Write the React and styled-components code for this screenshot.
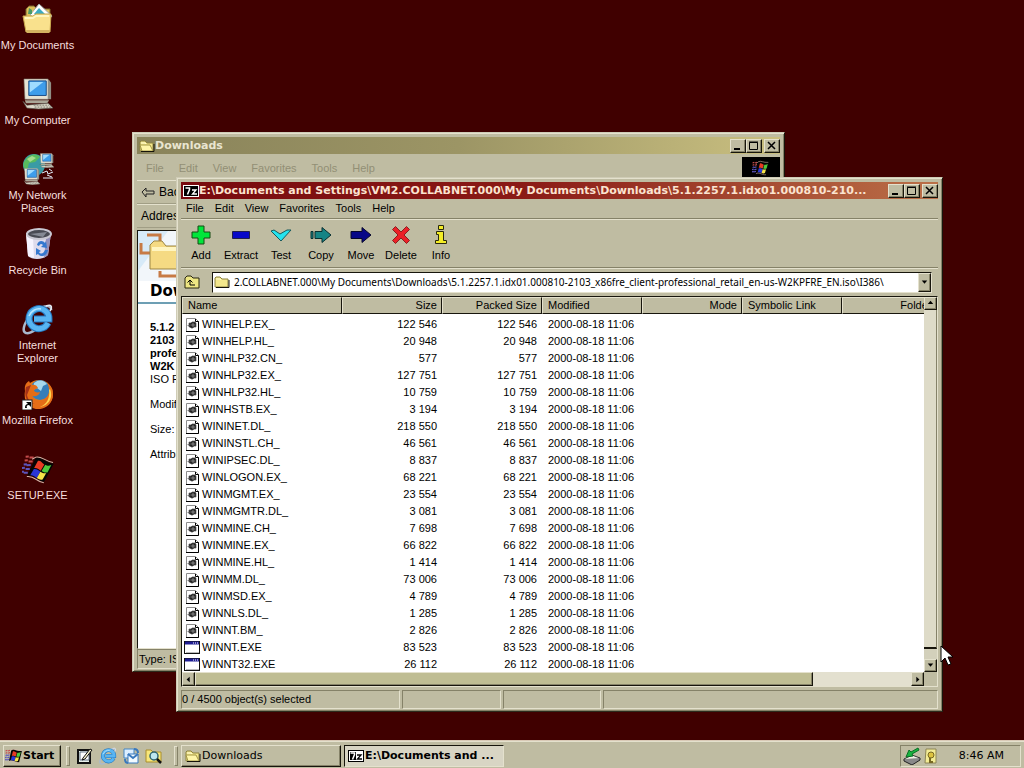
import React from "react";
import styled, { createGlobalStyle, css } from "styled-components";

const face = "#bfbca2";
const light = "#e4e1cd";
const shade = "#858268";
const ui = '"Liberation Sans", Arial, sans-serif';
const tahoma = '"DejaVu Sans", Verdana, sans-serif';

const raised = css`
  border: 1px solid;
  border-color: ${light} #17150c #17150c ${light};
  box-shadow: inset -1px -1px 0 ${shade};
`;
const sunken = css`
  border: 1px solid;
  border-color: ${shade} ${light} ${light} ${shade};
`;

const GlobalStyle = createGlobalStyle`
  * { box-sizing: border-box; }
  body { margin: 0; background: #400000; font: 11px/13px ${ui}; color: #000; }
  button, input { font: inherit; color: inherit; margin: 0; padding: 0; border: 0; background: none; }
  svg { display: block; flex: none; }
`;

const Screen = styled.div`
  display: flex;
  flex-direction: column;
  height: 100vh;
  overflow: hidden;
  background: #400000;
`;
const Desktop = styled.main`
  position: relative;
  flex: 1;
  min-height: 0;
`;
const Shortcuts = styled.nav`
  display: grid;
  grid-auto-rows: 75px;
  width: 75px;
`;
const Shortcut = styled.button`
  display: flex;
  flex-direction: column;
  align-items: center;
  gap: 4px;
  padding-top: 3px;
  color: #f6dede;
  text-align: center;
`;

/* Windows */
const Window = styled.section`
  position: absolute;
  left: ${(p) => p.$x}px;
  top: ${(p) => p.$y}px;
  width: ${(p) => p.$w}px;
  height: ${(p) => p.$h}px;
  display: flex;
  flex-direction: column;
  padding: 4px 4px 2px;
  background: ${face};
  border: 1px solid;
  border-color: #cfccb6 #17150c #2c2a1c #cfccb6;
  box-shadow: inset 1px 1px 0 ${light}, inset -1px -1px 0 ${shade};
`;
const TitleBar = styled.header`
  display: flex;
  align-items: center;
  height: 17px;
  padding: 0 0 0 2px;
  background: ${(p) =>
    p.$active
      ? "linear-gradient(90deg, #780a0e 0%, #8a1a16 45%, #bb7048 100%)"
      : "linear-gradient(90deg, #89835a 0%, #9c9565 50%, #c9bf80 100%)"};
`;
const Title = styled.h1`
  flex: 1;
  min-width: 0;
  margin: 0;
  overflow: hidden;
  white-space: nowrap;
  font: bold 11px/17px ${tahoma};
  color: ${(p) => (p.$active ? "#fbe3d0" : "#e9e5d0")};
`;
const Caption = styled.button`
  display: grid;
  place-items: center;
  width: 16px;
  height: 14px;
  margin-left: ${(p) => (p.$gap ? 2 : 0)}px;
  background: ${face};
  ${raised}
`;
const MenuBar = styled.nav`
  display: flex;
  align-items: center;
  gap: ${(p) => p.$gap}px;
  height: ${(p) => p.$h}px;
  padding: ${(p) => (p.$dim ? "2px 0 0 9px" : "0 0 0 5px")};
  color: ${(p) => (p.$dim ? "#928f75" : "#000")};
`;
const Rule = styled.div`
  height: 2px;
  border-top: 1px solid ${shade};
  border-bottom: 1px solid ${light};
`;

/* Downloads folder window */
const Throbber = styled.div`
  display: grid;
  place-items: center;
  width: 38px;
  height: 22px;
  margin-left: auto;
  background: #000;
`;
const Band = styled.div`
  display: flex;
  align-items: center;
  gap: 4px;
  height: 24px;
  padding: 0 4px;
  border-top: 1px solid ${light};
  border-bottom: 1px solid #a19e85;
  font-size: 12px;
`;
const FolderView = styled.div`
  flex: 1;
  min-height: 0;
  margin-top: 2px;
  overflow: hidden;
  background: #fff;
  border: 1px solid;
  border-color: #17150c ${light} ${light} #17150c;
`;
const Banner = styled.div`
  height: 73px;
  border-bottom: 2px solid #6d9fb4;
`;
const BannerTitle = styled.h2`
  margin: 0;
  padding-left: 12px;
  font: bold 15px/20px ${tahoma};
`;
const Details = styled.div`
  display: grid;
  gap: 12px;
  padding: 17px 12px;
  p { margin: 0; }
`;
const FolderStatus = styled.footer`
  height: 20px;
  padding: 0 1px;
  line-height: 19px;
  ${sunken}
`;

/* 7-Zip window */
const Toolbar = styled.div`
  display: flex;
  height: 47px;
`;
const Tool = styled.button`
  display: flex;
  flex-direction: column;
  align-items: center;
  justify-content: flex-start;
  gap: 2px;
  width: 40px;
  padding-top: 3px;
`;
const PathRow = styled.div`
  display: flex;
  align-items: center;
  gap: 5px;
  height: 27px;
  padding: 0 6px 1px 3px;
`;
const UpButton = styled.button`
  width: 23px;
`;
const Combo = styled.div`
  display: flex;
  align-items: center;
  flex: 1;
  min-width: 0;
  height: 21px;
  padding-left: 1px;
  background: #fff;
  border: 1px solid;
  border-color: #17150c ${light} ${light} #17150c;
  input {
    flex: 1;
    min-width: 0;
    margin-left: 4px;
    outline: 0;
    font: 10px/14px "Noto Sans", ${ui};
  }
`;
const ArrowButton = styled.button`
  display: grid;
  place-items: center;
  flex: none;
  width: ${(p) => p.$w || 13}px;
  height: ${(p) => p.$h || 13}px;
  background: ${face};
  ${raised}
`;
const ListBox = styled.div`
  display: grid;
  grid-template-columns: minmax(0, 1fr) 13px;
  grid-template-rows: minmax(0, 1fr) 14px;
  flex: 1;
  min-height: 0;
  background: ${face};
  border: 1px solid;
  border-color: #17150c ${light} ${light} #17150c;
`;
const ListClip = styled.div`
  overflow: hidden;
  background: #fff;
`;
const FileTable = styled.table`
  width: 760px;
  table-layout: fixed;
  border-spacing: 0;
  th, td {
    height: 17px;
    padding: 0 5px 0 6px;
    font-weight: normal;
    line-height: 17px;
    white-space: nowrap;
    text-align: left;
  }
  th {
    background: ${face};
    border: 1px solid;
    border-color: ${light} #17150c #17150c ${light};
    padding: 0 4px 0 5px;
    line-height: 15px;
  }
  th[data-num], td[data-num] { text-align: right; }
  td:first-child { padding-left: 2px; }
`;
const Spacer = styled.tbody`
  td { height: 2px; line-height: 2px; }
`;
const NameCell = styled.span`
  display: flex;
  align-items: center;
  gap: 2px;
`;
const VScroll = styled.div`
  display: flex;
  flex-direction: column;
  background: #e3e0d0;
`;
const VThumb = styled.div`
  flex: 1;
  background: #dedbc8;
  border-right: 1px solid ${shade};
  border-bottom: 2px solid #17150c;
`;
const VRest = styled.div`
  height: 10px;
  background: #d3d0bb;
`;
const HScroll = styled.div`
  display: flex;
  background: #e3e0cf;
`;
const HThumb = styled.div`
  flex: 0 1 83.3%;
  background: #bfbd93;
  ${raised}
`;
const Track = styled.div`
  flex: 1;
`;
const StatusBar = styled.footer`
  display: grid;
  grid-template-columns: 219px 99px 98px 1fr;
  gap: 2px;
  height: 19px;
  margin-top: 3px;
`;
const StatusCell = styled.div`
  padding: 0;
  line-height: 17px;
  white-space: nowrap;
  ${sunken}
`;

/* Taskbar */
const Taskbar = styled.footer`
  display: flex;
  align-items: center;
  height: 28px;
  padding: 2px 3px 0;
  background: ${face};
  border-top: 1px solid #d9c9b6;
  box-shadow: inset 0 1px 0 ${light};
`;
const StartButton = styled.button`
  display: flex;
  align-items: center;
  width: 58px;
  height: 22px;
  padding-left: 1px;
  font: bold 11px/18px ${tahoma};
  ${raised}
`;
const Grip = styled.div`
  width: 4px;
  height: 20px;
  margin: 0 3px 0 5px;
  border: 1px solid;
  border-color: ${light} ${shade} ${shade} ${light};
`;
const QuickLaunch = styled.div`
  display: flex;
  gap: 5px;
  margin: 0 6px 0 3px;
`;
const Task = styled.button`
  display: flex;
  align-items: center;
  gap: 1px;
  width: 160px;
  height: 22px;
  margin-right: 3px;
  padding-left: 3px;
  overflow: hidden;
  white-space: nowrap;
  font: ${(p) => (p.$active ? "bold" : "normal")} 11px/18px ${tahoma};
  ${(p) => (p.$active ? sunken : raised)}
  ${(p) =>
    p.$active &&
    css`
      background: #d8d5c4;
      border-color: #17150c ${light} ${light} #17150c;
    `}
`;
const Tray = styled.div`
  display: flex;
  align-items: center;
  gap: 2px;
  width: 121px;
  height: 22px;
  margin-left: auto;
  padding: 0 16px 0 2px;
  ${sunken}
  time {
    margin-left: auto;
    font: 11px/18px ${tahoma};
  }
`;
const Pointer = styled.svg`
  position: absolute;
  left: 940px;
  top: 645px;
`;

/* Icons */
const Svg = ({ w = 16, h = 16, box, children }) => (
  <svg width={w} height={h} viewBox={box || `0 0 ${w} ${h}`} aria-hidden="true">
    {children}
  </svg>
);
const Folder = ({ closed }) => (
  <Svg>
    <path d="M1 13V4l1-1h4l2 2h6v8z" fill="#f3e78c" stroke="#8d8340" />
    {!closed && <path d="M3 13L1 7h10l3 6z" fill="#fff6a8" stroke="#a39746" />}
    <path d="M2 5h4l1 1" stroke="#fffbd0" fill="none" />
    <path d="M2 13.500h13V6" stroke="#15130a" fill="none" />
  </Svg>
);
const SevenZip = ({ task }) => (
  <Svg>
    <rect x=".5" y="2.500" width="15" height="11" fill={task ? "#fff" : "#000"} stroke={task ? "#000" : "#fff"} />
    {task && <rect x="2" y="4" width="6" height="8" />}
    <path d="M2.500 5h4v1.500l-2 5" stroke="#fff" strokeWidth="1.500" fill="none" />
    <path d="M9 7h4l-3.500 4H14" stroke={task ? "#000" : "#fff"} strokeWidth="1.300" fill="none" />
  </Svg>
);
const Flag = ({ size = 16, tilt = 0 }) => (
  <Svg w={size} h={size} box="0 0 32 32">
    <g transform={`rotate(${tilt} 16 16)`}>
      <path d="M11 6c5-4 8 2 19 1l-5 20c-7 1-10-5-18-2z" fill="#050505" />
      <path d="M14 8c3-1 4 1 7 2l-2 7c-3-1-4-2-7-1z" fill="#e83a24" />
      <path d="M22 10c3 1 4 0 6-1l-2 8c-2 1-3 1-6 0z" fill="#4fc83c" />
      <path d="M12 17c3-1 4 0 7 1l-2 7c-3-1-5-2-7-1z" fill="#2937d6" />
      <path d="M19 18c3 1 4 1 6 0l-2 7c-2 1-3 1-6 0z" fill="#f5e34a" />
      <path d="M1 7l3-1M5 7l4-1M1 11l3-1M5 11l4-1" stroke="#c44c4c" strokeWidth="2" />
      <path d="M1 15l3-1M4 15l4-1M0 19l3-1M4 19l4-1M0 23l3-1M3 23l4-1" stroke="#5c55bd" strokeWidth="2" />
      <path d="M8 8l3-3c5-3 9 2 18 1M7 26c7-3 11 3 18 2" stroke="#d7b6a8" fill="none" />
    </g>
  </Svg>
);
const Monitor = ({ x = 0, y = 0, s = 1 }) => (
  <g transform={`translate(${x} ${y}) scale(${s})`}>
    <path d="M6 2h23l2 3v17H6z" fill="#8f8e84" />
    <path d="M3 1h25v21H4z" fill="#e6e2d4" stroke="#77746a" strokeWidth=".6" />
    <path d="M8 3h18v15H8z" fill="#3e9deb" stroke="#174a86" />
    <path d="M9 4h14L9 15z" fill="#9fdcff" />
    <path d="M4 23h25l-2 3H5z" fill="#aaa798" />
    <path d="M2 24l4 4 10-1 12-1 5 5-15 1-12-1z" fill="#dedacb" stroke="#55534b" strokeWidth=".7" />
    <path d="M13 28h16M14 30h17" stroke="#77756a" strokeDasharray="2 1" />
  </g>
);
const Ie = ({ size = 32 }) => (
  <Svg w={size} h={size} box="0 0 32 32">
    <path d="M29 7C30 0 18 3 9 12 1 21 0 29 4 30c2 1 7-1 11-5" fill="none" stroke="#a9b9cf" strokeWidth="2.500" />
    <path d="M26 20a10 10 0 1 1 1-4H12" fill="none" stroke="#2475bd" strokeWidth="7" />
    <path d="M26 20a10 10 0 1 1 1-4H12" fill="none" stroke="#58b5f2" strokeWidth="5" />
    <path d="M7 13c2-5 7-8 12-7" fill="none" stroke="#b8e6ff" strokeWidth="1.500" />
    <path d="M24 3c5-2 7 0 4 5" fill="none" stroke="#e4eaf2" strokeWidth="1.500" />
  </Svg>
);
const DocumentsIcon = () => (
  <Svg w={32} h={32}>
    <path d="M4 25V6l3-3h5l3 3h13v18z" fill="#ddbf5a" stroke="#78672c" />
    <path d="M8 12L17 1l13 12-7 8z" fill="#fff" stroke="#a0a8a6" />
    <path d="M12 11l5-6 7 7-4 4z" fill="#3babc1" />
    <path d="M7 5l3 2v4H6z" fill="#4b9a65" />
    <path d="M1 13h10l3-2h15l-1 18H4z" fill="#f9e18d" stroke="#c9a74d" />
    <path d="M3 15h8l3-2h13" fill="none" stroke="#fff5bd" strokeWidth="2" />
    <path d="M4 27h24l-1 3H5z" fill="#d4b361" />
  </Svg>
);
const NetworkIcon = () => (
  <Svg w={32} h={32}>
    <circle cx="12" cy="12" r="11" fill="#3a9ba5" />
    <path d="M2 9C7 0 15 0 18 4l-5 5-6 1-2 8C1 15 1 12 2 9z" fill="#59bb5d" />
    <path d="M5 6l5-3 4 2-6 4z" fill="#a6dc8d" />
    <Monitor x={17} y={0} s={0.46} />
    <Monitor x={1} y={15} s={0.52} />
    <path d="M20 20l5-2 1 3 5-2M21 25h10M25 22l5 2M27 16l3 2" stroke="#e4eefb" fill="none" />
  </Svg>
);
const RecycleIcon = () => (
  <Svg w={32} h={32}>
    <path d="M4 5l2 23c4 4 15 4 20-1l3-22z" fill="#dedbec" />
    <path d="M4 5l2 23 6 2-1-21z" fill="#f6f4ff" />
    <path d="M24 10l5-5-3 22-4 3z" fill="#9490ba" />
    <ellipse cx="17" cy="6" rx="12" ry="5" fill="#494b53" stroke="#c9c8d2" strokeWidth="2" />
    <path d="M8 6l17-2-4 5z" fill="#858993" />
    <path d="M15 17c1-5 6-5 8-2l1-2 1 7-6-1 2-2c-2-2-3-1-4 1zM14 20l5 3-2 1c2 3 5 1 6-2h3c-1 6-7 8-10 4l-2 1z" fill="#3578cf" />
  </Svg>
);
const FirefoxIcon = () => (
  <Svg w={32} h={32}>
    <circle cx="17" cy="16" r="14" fill="#e97713" />
    <circle cx="18" cy="12" r="10" fill="#367eb9" />
    <path d="M12 5c5-4 10-3 13 1l-4 2-2 5-4-3-4 2z" fill="#a7d8ed" />
    <path d="M3 13C2 7 5 4 7 3l2 4c3-1 6 0 7 3l-4 2c0 2 3 3 6 2-1 4-5 5-8 4 4 7 13 5 16-1 2-4 1-9-1-12 6 4 7 11 5 17-4 9-15 12-23 6-4-4-5-9-4-15z" fill="#e56d17" />
    <path d="M28 11c4 10-3 17-10 18 7-3 10-9 9-17z" fill="#ffd34d" />
    <path d="M4 9l5-2-4 10c1 5 4 8 8 9C4 26 2 17 4 9z" fill="#a53117" />
    <rect x="0" y="22" width="10" height="10" fill="#fff" stroke="#222" />
    <path d="M3 30c0-3 1-4 3-4l-2-2h5v5l-2-2c-2 0-3 1-2 3z" fill="#000" />
  </Svg>
);
const FileIcon = () => (
  <Svg>
    <path d="M2.500 1.500h9l3 3v10h-12z" fill="#fff" stroke="#8c8c8c" />
    <path d="M11.500 2v2.500h3v10H2" fill="none" stroke="#000" />
    <path d="M5 6h2l1-1h3l1 1v4h-2l-1 1H7l-1-1H5zM3.500 8.500H6" fill="#222" stroke="#555" strokeWidth=".7" />
    <path d="M9 6v4M6.500 8H11" stroke="#aaa" strokeWidth=".7" />
  </Svg>
);
const ProgramIcon = () => (
  <Svg>
    <rect x=".5" y="1.500" width="15" height="12" fill="#fff" stroke="#111" />
    <path d="M1 3h14" stroke="#1e1c92" strokeWidth="3" />
    <path d="M9 3h1M11 3h1M13 3h1" stroke="#fff" />
    <path d="M2 12.500h13" stroke="#bbb" />
  </Svg>
);
const Arrow = ({ dir }) => {
  const d = { up: "M0 4h7L3.500 0z", down: "M0 1h7L3.500 5z", left: "M5 0v7L1 3.500z", right: "M2 0v7l4-3.500z" }[dir];
  return <Svg w={7} h={7} box="-1 -1 9 9"><path d={d} /></Svg>;
};

const toolIcons = {
  Add: <path d="M9 3h6v6h6v6h-6v6H9v-6H3V9h6z" fill="#00e63a" stroke="#164a13" />,
  Extract: <path d="M3.500 8.500h17v7h-17z" fill="#0708c8" stroke="#22214a" />,
  Test: <path d="M2 8l3-1 6 4 7-4h4L12 18z" fill="#25e3ef" stroke="#17595b" />,
  Copy: <path d="M2 8.500h2v7H2zM6 8.500h7v-4l9 7.500-9 7.500v-4H6z" fill="#168485" stroke="#092f30" />,
  Move: <path d="M2 8.500h11v-4l9 7.500-9 7.500v-4H2z" fill="#080887" stroke="#08082b" />,
  Delete: <path d="M3.500 6.500l3-3L12 9l5.500-5.500 3 3L15 12l5.500 5.500-3 3L12 15l-5.500 5.500-3-3L9 12z" fill="#eb2027" stroke="#8a1f20" />,
  Info: <path d="M9.500 2.500h5v4h-5zM7.500 8.500h7v9h3v3h-11v-3h3v-6h-2z" fill="#f4ed25" stroke="#2b2a0c" />,
};

const Buttons = () => (
  <>
    <Caption aria-label="Minimize"><Svg w={10} h={10}><path d="M1 8h6" stroke="#000" strokeWidth="2" /></Svg></Caption>
    <Caption aria-label="Maximize"><Svg w={10} h={10}><path d="M.5 1.500h8v7h-8zM0 1h9" fill="none" stroke="#000" /></Svg></Caption>
    <Caption aria-label="Close" $gap><Svg w={10} h={10}><path d="M1 1l7 7M8 1L1 8" stroke="#000" strokeWidth="1.500" /></Svg></Caption>
  </>
);

const shortcuts = [
  ["My Documents", <DocumentsIcon />],
  ["My Computer", <Svg w={32} h={32} box="1 0 33 33"><Monitor /></Svg>],
  ["My Network Places", <NetworkIcon />],
  ["Recycle Bin", <RecycleIcon />],
  ["Internet Explorer", <Ie />],
  ["Mozilla Firefox", <FirefoxIcon />],
  ["SETUP.EXE", <Flag size={32} tilt={14} />],
];
const menus = ["File", "Edit", "View", "Favorites", "Tools", "Help"];
const files = [
  ["WINHELP.EX_", "122 546"], ["WINHELP.HL_", "20 948"], ["WINHLP32.CN_", "577"],
  ["WINHLP32.EX_", "127 751"], ["WINHLP32.HL_", "10 759"], ["WINHSTB.EX_", "3 194"],
  ["WININET.DL_", "218 550"], ["WININSTL.CH_", "46 561"], ["WINIPSEC.DL_", "8 837"],
  ["WINLOGON.EX_", "68 221"], ["WINMGMT.EX_", "23 554"], ["WINMGMTR.DL_", "3 081"],
  ["WINMINE.CH_", "7 698"], ["WINMINE.EX_", "66 822"], ["WINMINE.HL_", "1 414"],
  ["WINMM.DL_", "73 006"], ["WINMSD.EX_", "4 789"], ["WINNLS.DL_", "1 285"],
  ["WINNT.BM_", "2 826"], ["WINNT.EXE", "83 523"], ["WINNT32.EXE", "26 112"],
];

function DownloadsWindow() {
  return (
    <Window $x={132} $y={132} $w={653} $h={540}>
      <TitleBar>
        <Folder />
        <Title>Downloads</Title>
        <Buttons />
      </TitleBar>
      <MenuBar $h={26} $gap={15} $dim>
        {menus.map((m) => <span key={m}>{m}</span>)}
        <Throbber><Flag size={18} /></Throbber>
      </MenuBar>
      <Band>
        <Svg w={14} h={12}><path d="M1 6l4-4v3h8v3H5v3z" fill="none" stroke="#222" /></Svg>
        Back
      </Band>
      <Band>Address</Band>
      <FolderView>
        <Banner>
          <Svg w={60} h={50}>
            <path d="M0 0h60v50H0z" fill="#f2f6fa" />
            <path d="M0 0h30L0 40z" fill="#d7eaf8" />
            <path d="M9 4h13v7M3 12v10h9M22 40v5h18" fill="none" stroke="#c77a45" strokeWidth="3" />
            <path d="M12 38V14l4-4h8l4 5h28v23z" fill="#f5da83" stroke="#9b8545" />
            <path d="M14 18h42" stroke="#fff5c0" strokeWidth="4" />
          </Svg>
          <BannerTitle>Downloads</BannerTitle>
        </Banner>
        <Details>
          <p>
            <b>5.1.2<br />2103<br />profe<br />W2K</b>
            <br />ISO F
          </p>
          <p>Modifi</p>
          <p>Size:</p>
          <p>Attribu</p>
        </Details>
      </FolderView>
      <FolderStatus>Type: ISO</FolderStatus>
    </Window>
  );
}

function ArchiveWindow() {
  return (
    <Window $x={176} $y={177} $w={767} $h={535}>
      <TitleBar $active>
        <SevenZip />
        <Title $active>
          E:\Documents and Settings\VM2.COLLABNET.000\My Documents\Downloads\5.1.2257.1.idx01.000810-210...
        </Title>
        <Buttons />
      </TitleBar>
      <MenuBar $h={19} $gap={11}>
        {menus.map((m) => <span key={m}>{m}</span>)}
      </MenuBar>
      <Rule />
      <Toolbar>
        {Object.entries(toolIcons).map(([name, icon]) => (
          <Tool key={name}>
            <Svg w={24} h={24}>{icon}</Svg>
            {name}
          </Tool>
        ))}
      </Toolbar>
      <Rule />
      <PathRow>
        <UpButton aria-label="Up one level">
          <Svg>
            <path d="M1 14V4l2-2h4l2 2h6v10z" fill="#eee683" stroke="#282711" />
            <path d="M6 6v5h5M3.500 8.500L6 6l2.500 2.500" fill="none" stroke="#000" />
          </Svg>
        </UpButton>
        <Combo>
          <Folder closed />
          <input
            aria-label="Path"
            defaultValue="2.COLLABNET.000\My Documents\Downloads\5.1.2257.1.idx01.000810-2103_x86fre_client-professional_retail_en-us-W2KPFRE_EN.iso\I386\"
          />
          <ArrowButton $h={19} aria-label="Show paths"><Arrow dir="down" /></ArrowButton>
        </Combo>
      </PathRow>
      <ListBox>
        <ListClip>
          <FileTable>
            <colgroup>
              <col width="160" /><col width="100" /><col width="100" /><col width="100" />
              <col width="100" /><col width="100" /><col width="100" />
            </colgroup>
            <thead>
              <tr>
                <th>Name</th><th data-num>Size</th><th data-num>Packed Size</th><th>Modified</th>
                <th data-num>Mode</th><th>Symbolic Link</th><th data-num>Folders</th>
              </tr>
            </thead>
            <Spacer><tr><td colSpan={7} /></tr></Spacer>
            <tbody>
              {files.map(([name, size]) => (
                <tr key={name}>
                  <td><NameCell>{name.endsWith("EXE") ? <ProgramIcon /> : <FileIcon />}{name}</NameCell></td>
                  <td data-num>{size}</td>
                  <td data-num>{size}</td>
                  <td>2000-08-18 11:06</td>
                  <td /><td /><td />
                </tr>
              ))}
            </tbody>
          </FileTable>
        </ListClip>
        <VScroll>
          <ArrowButton aria-label="Scroll up"><Arrow dir="up" /></ArrowButton>
          <VThumb />
          <VRest />
          <ArrowButton aria-label="Scroll down"><Arrow dir="down" /></ArrowButton>
        </VScroll>
        <HScroll>
          <ArrowButton $h={14} aria-label="Scroll left"><Arrow dir="left" /></ArrowButton>
          <HThumb />
          <Track />
          <ArrowButton $h={14} aria-label="Scroll right"><Arrow dir="right" /></ArrowButton>
        </HScroll>
      </ListBox>
      <StatusBar>
        <StatusCell>0 / 4500 object(s) selected</StatusCell>
        <StatusCell /><StatusCell /><StatusCell />
      </StatusBar>
    </Window>
  );
}

export default function App() {
  return (
    <Screen>
      <GlobalStyle />
      <Desktop>
        <Shortcuts aria-label="Desktop">
          {shortcuts.map(([name, icon]) => (
            <Shortcut key={name}>{icon}<span>{name}</span></Shortcut>
          ))}
        </Shortcuts>
        <DownloadsWindow />
        <ArchiveWindow />
        <Pointer width="14" height="22" viewBox="0 0 14 22" aria-hidden="true">
          <path d="M1 1v16l4-4 3 7 3-1-3-7h5z" fill="#fff" stroke="#000" />
        </Pointer>
      </Desktop>
      <Taskbar>
        <StartButton><Flag size={18} />Start</StartButton>
        <Grip />
        <QuickLaunch>
          <Svg w={18} h={18}>
            <path d="M2 3h12v13H2z" fill="#e8f0ea" stroke="#111" strokeWidth="2" />
            <path d="M4 5h9v8H4z" fill="#fff" stroke="#678" />
            <path d="M7 11l7-9 2 1-7 9-3 1z" fill="#f5f1cf" stroke="#111" />
          </Svg>
          <Ie size={18} />
          <Svg w={18} h={18}>
            <path d="M2 2h10v9H2z" fill="#dceeff" stroke="#4385c4" />
            <path d="M6 7h10v9H6z" fill="#f2faff" stroke="#3978bd" />
            <path d="M6 7l5 4 5-4M3 12c0 3 1 4 3 4M12 2c3 0 4 1 4 4" fill="none" stroke="#3978bd" strokeWidth="2" />
          </Svg>
          <Svg w={18} h={18}>
            <path d="M1 15V3h5l2 2h8v10z" fill="#f8e779" stroke="#aa8e2d" />
            <circle cx="9" cy="9" r="4" fill="#bde7ef" stroke="#2f6572" strokeWidth="1.500" />
            <path d="M12 12l4 4" stroke="#111" strokeWidth="2.500" />
          </Svg>
        </QuickLaunch>
        <Grip />
        <Task><Folder />Downloads</Task>
        <Task $active><SevenZip task />E:\Documents and ...</Task>
        <Tray>
          <Svg w={18} h={18}>
            <path d="M1 12l8-4 8 3-8 5z" fill="#f1f0e4" stroke="#333" />
            <path d="M1 12v2l8 4 8-5v-2" fill="#888" stroke="#222" />
            <path d="M15 1L8 5 6 3 3 10l7-1-1-2 7-4z" fill="#18b640" stroke="#0a6e25" />
          </Svg>
          <Svg w={16} h={16}>
            <path d="M3 1h10v14H2z" fill="#f3ec95" stroke="#8b8456" />
            <circle cx="8" cy="7" r="3" fill="#ddc340" stroke="#776823" />
            <path d="M7 10v4h3" stroke="#776823" fill="none" strokeWidth="2" />
          </Svg>
          <time>8:46 AM</time>
        </Tray>
      </Taskbar>
    </Screen>
  );
}
